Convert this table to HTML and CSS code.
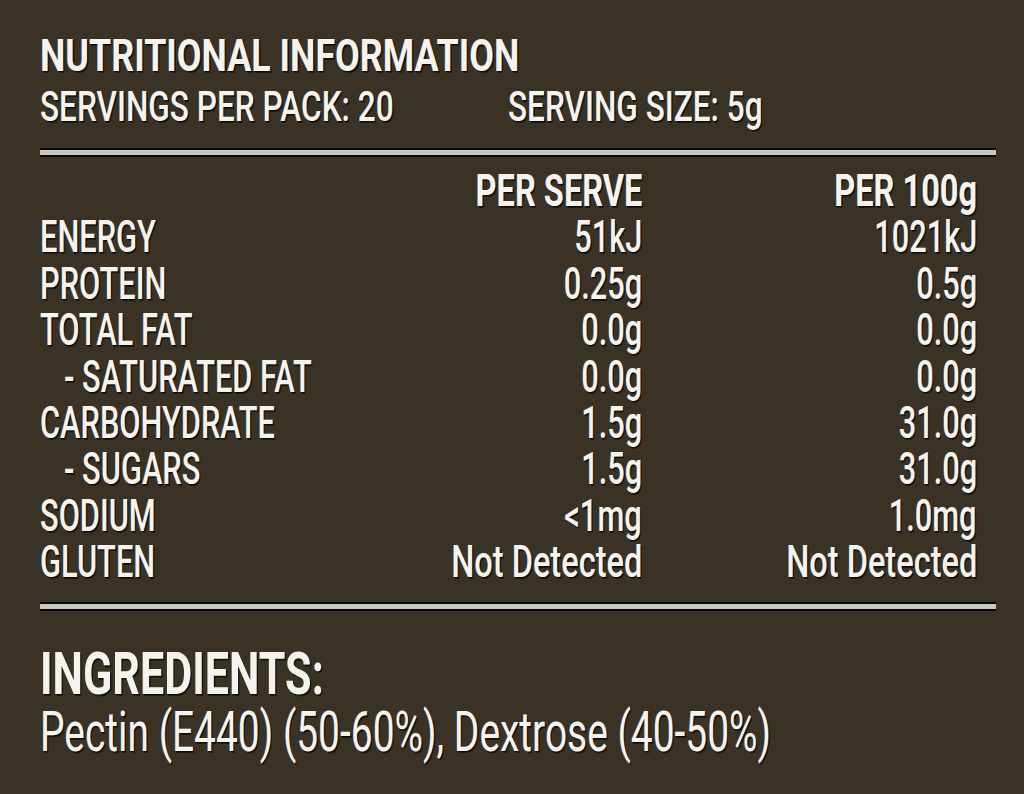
FILE: index.html
```html
<!DOCTYPE html>
<html lang="en">
<head>
<meta charset="utf-8">
<title>Nutritional Information</title>
<link rel="stylesheet" href="styles.css">
</head>
<body>
<main class="label">
  <h1 class="title"><span class="sq">NUTRITIONAL INFORMATION</span></h1>
  <div class="servings">
    <div class="serv-a"><span class="sq">SERVINGS PER PACK: 20</span></div>
    <div class="serv-b"><span class="sq">SERVING SIZE: 5g</span></div>
  </div>
  <div class="rule"></div>
  <div class="facts">
    <div class="cell"></div>
    <div class="cell num head"><span class="sqr">PER SERVE</span></div>
    <div class="cell num head"><span class="sqr">PER 100g</span></div>

    <div class="cell"><span class="sq">ENERGY</span></div>
    <div class="cell num"><span class="sqr">51kJ</span></div>
    <div class="cell num"><span class="sqr">1021kJ</span></div>

    <div class="cell"><span class="sq">PROTEIN</span></div>
    <div class="cell num"><span class="sqr">0.25g</span></div>
    <div class="cell num"><span class="sqr">0.5g</span></div>

    <div class="cell"><span class="sq">TOTAL FAT</span></div>
    <div class="cell num"><span class="sqr">0.0g</span></div>
    <div class="cell num"><span class="sqr">0.0g</span></div>

    <div class="cell sub"><span class="sq">- SATURATED FAT</span></div>
    <div class="cell num"><span class="sqr">0.0g</span></div>
    <div class="cell num"><span class="sqr">0.0g</span></div>

    <div class="cell"><span class="sq">CARBOHYDRATE</span></div>
    <div class="cell num"><span class="sqr">1.5g</span></div>
    <div class="cell num"><span class="sqr">31.0g</span></div>

    <div class="cell sub"><span class="sq">- SUGARS</span></div>
    <div class="cell num"><span class="sqr">1.5g</span></div>
    <div class="cell num"><span class="sqr">31.0g</span></div>

    <div class="cell"><span class="sq">SODIUM</span></div>
    <div class="cell num"><span class="sqr">&lt;1mg</span></div>
    <div class="cell num"><span class="sqr">1.0mg</span></div>

    <div class="cell"><span class="sq">GLUTEN</span></div>
    <div class="cell num"><span class="sqr wide">Not Detected</span></div>
    <div class="cell num"><span class="sqr wide">Not Detected</span></div>
  </div>
  <div class="rule rule-bottom"></div>
  <h2 class="ing-title"><span class="sq">INGREDIENTS:</span></h2>
  <p class="ing-text"><span class="sq">Pectin (E440) (50-60%), Dextrose (40-50%)</span></p>
</main>
</body>
</html>
```

FILE: styles.css
```css
html, body {
  margin: 0;
  padding: 0;
  background: #3a3325;
  overflow: hidden;
}

.label {
  --sx: 0.72;
  width: 1024px;
  height: 794px;
  box-sizing: border-box;
  padding: 33px 28px 0 40px;
  overflow: hidden;
  color: #f5f3ee;
  font-family: Roboto, "Liberation Sans", sans-serif;
  text-shadow: 1px 1px 0 #0c0a07, 2px 2px 0 rgba(0, 0, 0, 0.45);
}

.sq, .sqr {
  display: inline-block;
  white-space: nowrap;
  transform: scaleX(var(--sx));
  transform-origin: left center;
}

.sqr {
  transform-origin: right center;
}

.title {
  --sx: 0.797;
  margin: 0;
  font-size: 45px;
  font-weight: 700;
  line-height: 46px;
}

.servings {
  --sx: 0.752;
  display: flex;
  margin-top: 5px;
  font-size: 42px;
  font-weight: 500;
  line-height: 46px;
}

.serv-a {
  width: 468px;
  flex: none;
}

.rule {
  margin-top: 18px;
  height: 5px;
  background: #c9c7c2;
  border-top: 2px solid #0b0906;
  border-bottom: 2px solid #0b0906;
}

.facts {
  --sx: 0.70;
  display: grid;
  grid-template-columns: 402px 200px 335px;
  margin-top: 11px;
  font-size: 44px;
  font-weight: 500;
  line-height: 46.4px;
}

.cell {
  white-space: nowrap;
}

.cell.num {
  display: flex;
  justify-content: flex-end;
}

.cell.head {
  --sx: 0.74;
  font-weight: 700;
}

.cell.sub {
  padding-left: 24px;
}

.cell .wide {
  --sx: 0.74;
}

.rule-bottom {
  margin-top: 16px;
}

.ing-title {
  --sx: 0.73;
  margin: 33px 0 0;
  font-size: 59px;
  font-weight: 700;
  line-height: 60px;
}

.ing-text {
  --sx: 0.695;
  margin: 0;
  font-size: 56px;
  font-weight: 400;
  line-height: 56px;
}
```
